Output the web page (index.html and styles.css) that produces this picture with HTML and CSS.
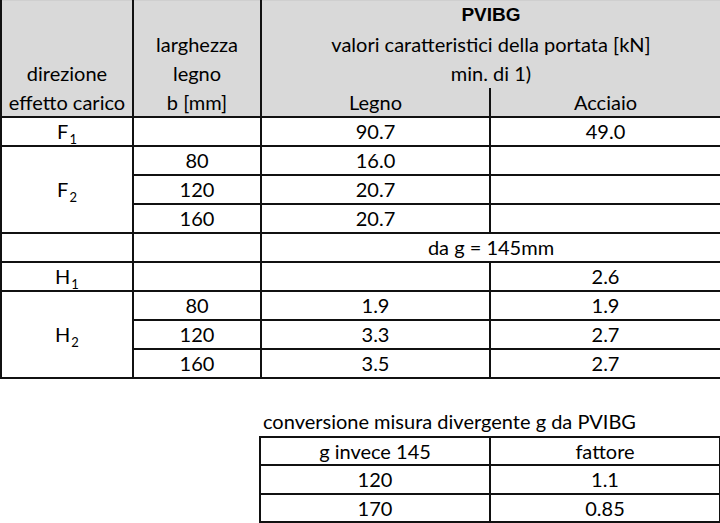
FILE: index.html
```html
<!DOCTYPE html>
<html lang="it">
<head>
<meta charset="utf-8">
<title>PVIBG</title>
<link rel="stylesheet" href="styles.css">
</head>
<body>
<table class="main">
  <colgroup>
    <col class="c1"><col class="c2"><col class="c3"><col class="c4">
  </colgroup>
  <thead>
    <tr>
      <td class="h hl"></td>
      <td class="h hl"></td>
      <td class="h hl title" colspan="2">PVIBG</td>
    </tr>
    <tr>
      <td class="h hl"></td>
      <td class="h hl">larghezza</td>
      <td class="h hl" colspan="2">valori caratteristici della portata [kN]</td>
    </tr>
    <tr>
      <td class="h hl">direzione</td>
      <td class="h hl">legno</td>
      <td class="h hl" colspan="2">min. di 1)</td>
    </tr>
    <tr>
      <td class="h hb">effetto carico</td>
      <td class="h hb">b [mm]</td>
      <td class="h hb">Legno</td>
      <td class="h hb">Acciaio</td>
    </tr>
  </thead>
  <tbody>
    <tr><td>F<sub>1</sub></td><td></td><td>90.7</td><td>49.0</td></tr>
    <tr><td rowspan="3">F<sub>2</sub></td><td>80</td><td>16.0</td><td></td></tr>
    <tr><td>120</td><td>20.7</td><td></td></tr>
    <tr><td>160</td><td>20.7</td><td></td></tr>
    <tr><td></td><td></td><td colspan="2">da g = 145mm</td></tr>
    <tr><td>H<sub>1</sub></td><td></td><td></td><td>2.6</td></tr>
    <tr><td rowspan="3">H<sub>2</sub></td><td>80</td><td>1.9</td><td>1.9</td></tr>
    <tr><td>120</td><td>3.3</td><td>2.7</td></tr>
    <tr><td>160</td><td>3.5</td><td>2.7</td></tr>
  </tbody>
</table>

<div class="conv">
  <div class="caption">conversione misura divergente g da PVIBG</div>
  <table class="small">
    <colgroup><col class="s1"><col class="s2"></colgroup>
    <tr><td>g invece 145</td><td>fattore</td></tr>
    <tr><td>120</td><td>1.1</td></tr>
    <tr><td>170</td><td>0.85</td></tr>
  </table>
</div>
</body>
</html>
```
FILE: styles.css
```css
html, body {
  margin: 0;
  padding: 0;
  background: #fff;
}
body {
  font-family: Lato, "Open Sans", sans-serif;
  font-size: 20px;
  color: #000;
  width: 720px;
}
table {
  border-collapse: collapse;
  table-layout: fixed;
}
td {
  border: 2px solid #111;
  text-align: center;
  vertical-align: middle;
  padding: 0;
  white-space: nowrap;
  line-height: 24px;
}
.main {
  width: 720px;
}
.main tr { height: 29px; }
.c1 { width: 132px; }
.c2 { width: 128px; }
.c3 { width: 229px; }
.c4 { width: 231px; }

.h {
  background: #d9d9d9;
}
.main thead tr:first-child td {
  border-top: 1px solid #cfcfcf;
}
.hl {
  border-bottom: 0;
}
.main thead tr:nth-child(2) td,
.main thead tr:nth-child(3) td,
.main thead tr:nth-child(4) td {
  border-top: 0;
}
.title {
  font-family: "Liberation Sans", Arial, sans-serif;
  font-weight: bold;
  font-size: 19px;
}
sub {
  font-size: 13px;
  vertical-align: -5px;
  line-height: 0;
  margin-left: 1px;
}
.conv {
  margin-left: 259px;
  width: 460px;
}
.caption {
  margin-top: 28px;
  height: 29px;
  line-height: 29px;
  padding-left: 4px;
}
.small {
  width: 460px;
}
.small tr { height: 28.5px; }
.s1 { width: 230px; }
.s2 { width: 230px; }
```
